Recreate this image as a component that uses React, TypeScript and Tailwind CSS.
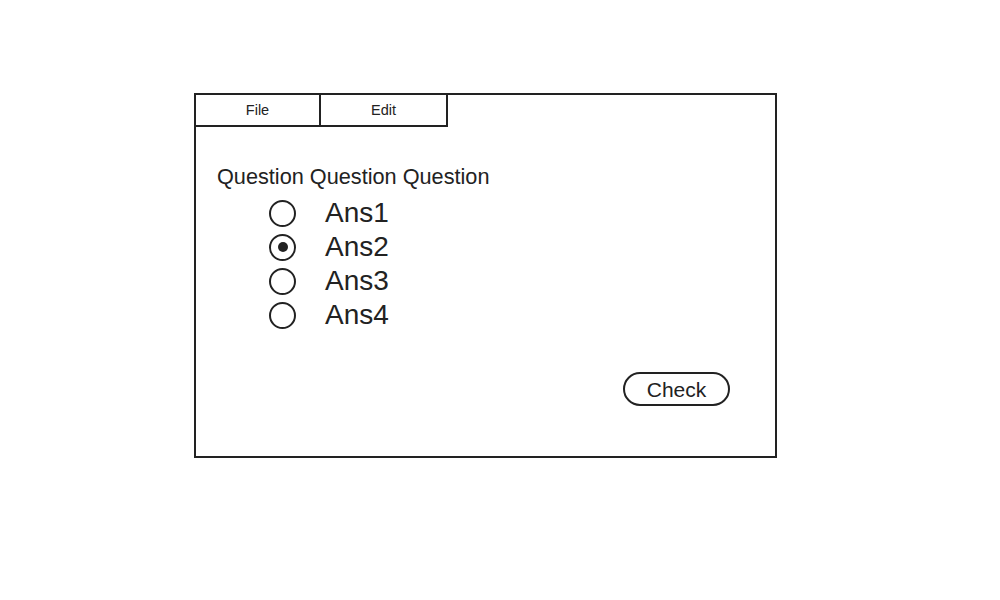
export default function App() {
  const answers = ["Ans1", "Ans2", "Ans3", "Ans4"];
  return (
    <div className="min-h-[600px] w-[1000px] bg-white font-['Liberation_Sans',Arial,sans-serif] text-[#222]">
      <div className="h-[93px]" />
      <div className="ml-[194px] flex h-[365px] w-[583px] flex-col border-2 border-[#222]">
        <div className="flex">
          <div className="flex h-[32px] w-[125px] items-center justify-center border-r-2 border-b-2 border-[#222] pt-px text-[14.5px]">File</div>
          <div className="flex h-[32px] w-[127px] items-center justify-center border-r-2 border-b-2 border-[#222] pt-px text-[14.5px]">Edit</div>
        </div>
        <div className="pl-[21px] pt-[37px] text-[21.7px] leading-[26px]">Question Question Question</div>
        <div className="mt-[6px] flex flex-col">
          {answers.map((a, i) => (
            <div key={a} className="flex h-[34px] items-center">
              <div className="ml-[73px] flex h-[27px] w-[27px] items-center justify-center rounded-full border-[2.5px] border-[#222]">
                {i === 1 && <div className="h-[10px] w-[10px] rounded-full bg-[#222]" />}
              </div>
              <span className="ml-[29px] text-[28px] leading-[34px]">{a}</span>
            </div>
          ))}
        </div>
        <div className="mt-[40px] flex justify-end pr-[45px]">
          <div className="flex h-[34px] w-[107px] items-center justify-center rounded-full border-2 border-[#222] pt-[2px] text-[21px]">Check</div>
        </div>
      </div>
    </div>
  );
}
